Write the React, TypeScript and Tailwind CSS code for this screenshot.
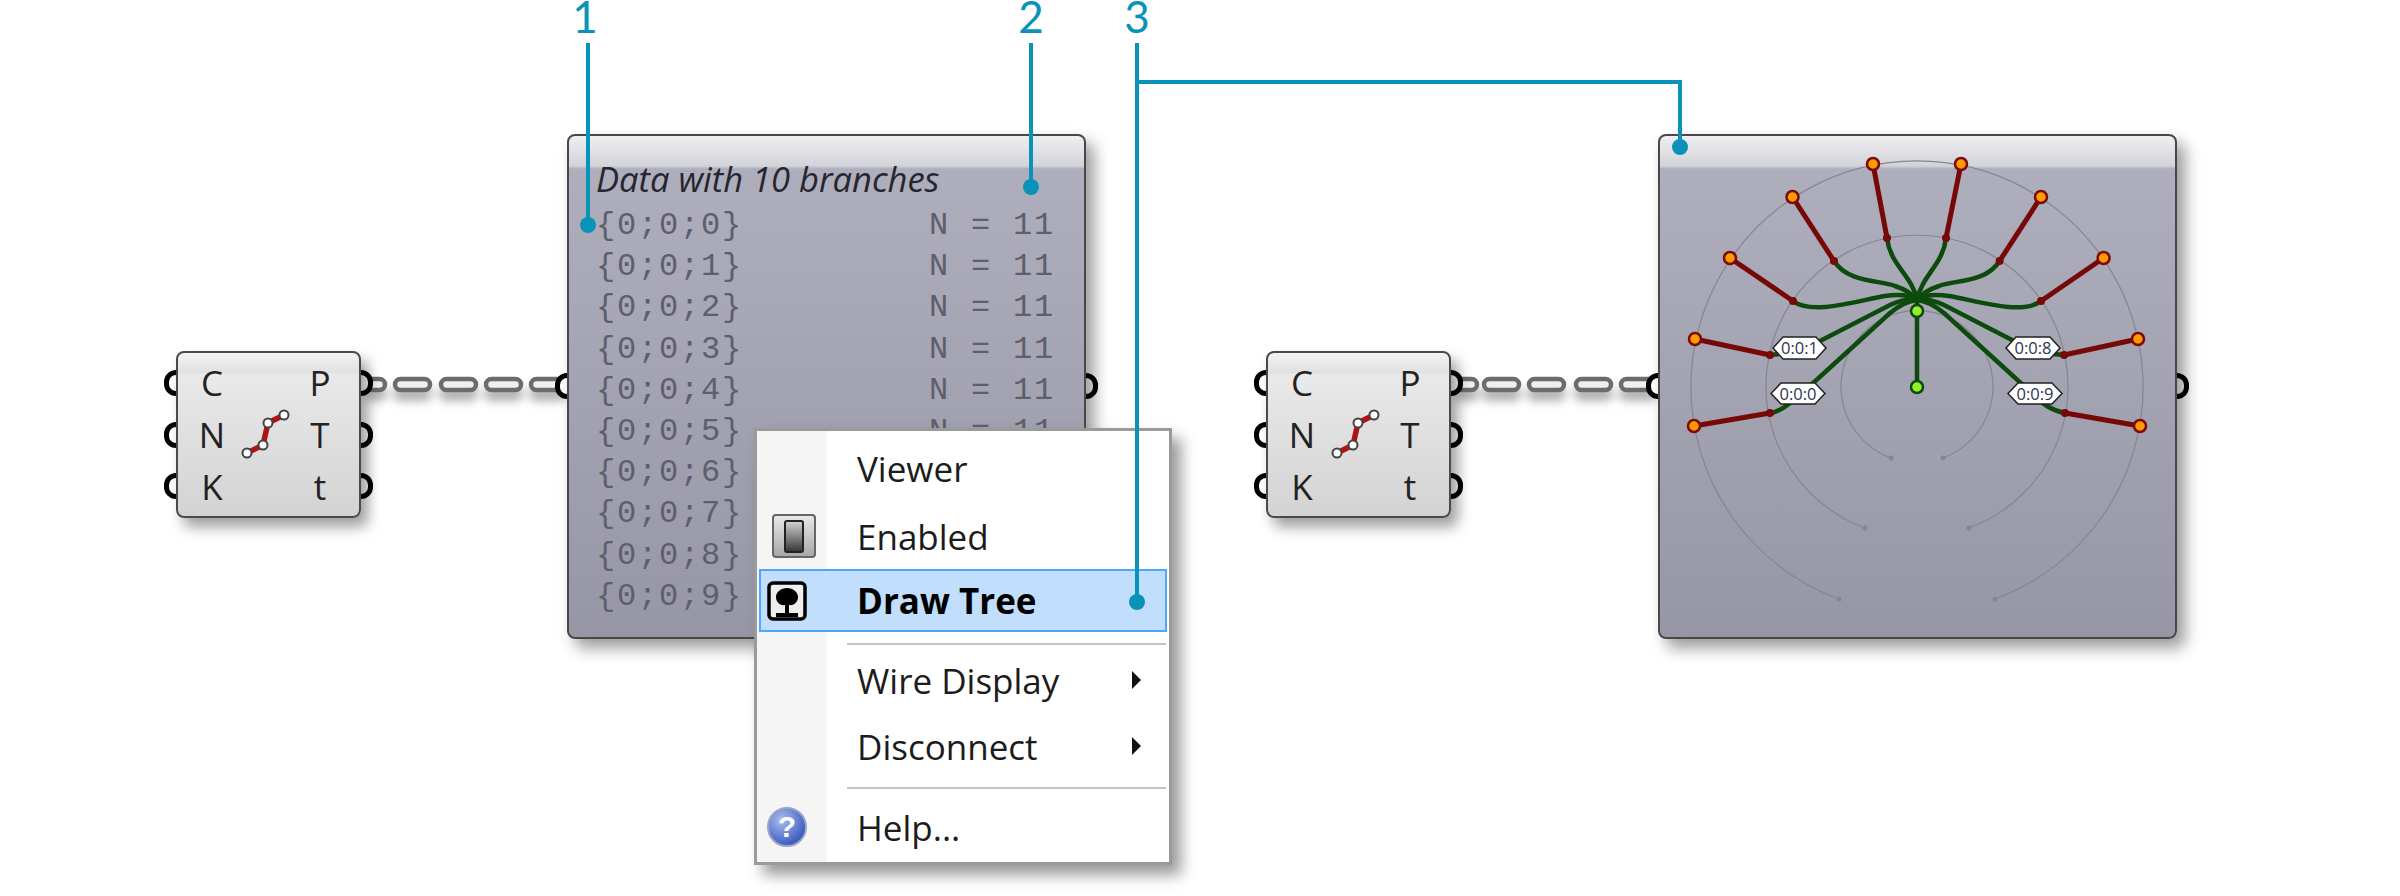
import React from "react";

const BLUE = "#0a93b8";

function Port({ side, top }: { side: "l" | "r"; top: string }) {
  return (
    <div
      className={`absolute w-[24px] h-[26px] rounded-full border-[5px] border-black bg-white ${
        side === "l" ? "left-[-12px]" : "right-[-12px]"
      } ${top}`}
    />
  );
}

function CurveIcon() {
  return (
    <svg width="56" height="56" viewBox="0 0 56 56" className="shrink-0">
      <polyline points="9,46 25,38 30,16 46,8" fill="none" stroke="#b01212" strokeWidth="5.5" />
      {[[9, 46], [25, 38], [30, 16], [46, 8]].map(([x, y]) => (
        <circle key={x} cx={x} cy={y} r="4.5" fill="#fff" stroke="#444" strokeWidth="2" />
      ))}
    </svg>
  );
}

function CurveComponent({ pos }: { pos: string }) {
  const ins = ["C", "N", "K"];
  const outs = ["P", "T", "t"];
  return (
    <div className={`absolute top-[351px] w-[185px] h-[167px] ${pos}`}>
      <Port side="l" top="top-[19px]" />
      <Port side="l" top="top-[71px]" />
      <Port side="l" top="top-[122px]" />
      <Port side="r" top="top-[19px]" />
      <Port side="r" top="top-[71px]" />
      <Port side="r" top="top-[122px]" />
      <div className="relative h-full rounded-[8px] border-[2.5px] border-[#4a4a4a] bg-[linear-gradient(180deg,#f3f3f3_0,#e0e0e0_20px,#e9e9e9_21px,#d3d3d3_100%)] shadow-[7px_9px_14px_rgba(0,0,0,0.38)] flex items-center justify-between pl-[16px] pr-[21px] font-['Open_Sans',sans-serif] text-[35px] leading-none text-[#222]">
        <div className="flex flex-col items-center w-[36px] gap-[17px]">
          {ins.map((t) => (
            <span key={t} className="h-[35px] flex items-center">{t}</span>
          ))}
        </div>
        <CurveIcon />
        <div className="flex flex-col items-center w-[36px] gap-[17px]">
          {outs.map((t) => (
            <span key={t} className="h-[35px] flex items-center">{t}</span>
          ))}
        </div>
      </div>
    </div>
  );
}

function Wire({ segs, y }: { segs: [number, number][]; y: number }) {
  return (
    <g>
      {segs.map(([a, b]) => (
        <rect key={a} x={a} y={y - 5} width={b - a} height={11} rx="5.5" fill="#efefef" stroke="#6c6c6c" strokeWidth="4.5" />
      ))}
    </g>
  );
}

const rows = [0, 1, 2, 3, 4, 5, 6, 7, 8, 9];

function DataPanel() {
  return (
    <div className="absolute left-[567px] top-[134px] w-[519px] h-[505px]">
      <Port side="l" top="top-[239px]" />
      <Port side="r" top="top-[239px]" />
      <div className="relative h-full rounded-[8px] border-[2.5px] border-[#484848] bg-[linear-gradient(180deg,#efeff2_0,#d2d2da_30px,#aeaebc_33px,#9696a4_100%)] shadow-[8px_9px_16px_rgba(0,0,0,0.4)] pl-[27px] pr-[29px] pt-[23px]">
        <div className="font-['Open_Sans',sans-serif] italic text-[34.5px] leading-[40px] text-[#26262e]">
          Data with 10 branches
        </div>
        <div className="flex flex-col pt-[6px] font-['Liberation_Mono',monospace] text-[32px] tracking-[1.8px] text-[#5e5e6c]">
          {rows.map((r) => (
            <div key={r} className="h-[41.2px] leading-[41px] flex justify-between">
              <span>{`{0;0;${r}}`}</span>
              <span>N = 11</span>
            </div>
          ))}
        </div>
      </div>
    </div>
  );
}

const leftOuter = [[1694, 426], [1695, 339], [1730, 258], [1792.5, 197], [1873, 164]];
const rightOuter = [[2140, 426], [2138, 339], [2103.6, 258], [2041, 197], [1961, 164]];
const leftMid = [[1770, 413], [1770, 355], [1793, 301], [1834, 261], [1887, 238]];
const rightMid = [[2065, 413], [2064, 355], [2041, 301], [1999.6, 261], [1946, 238]];

const greens = [
  "M1770 413 C1782 411 1790 403 1800 395 L1890 313 Q1905 301 1917 300",
  "M1770 355 L1790 353 L1822 340 L1890 305 Q1905 298 1917 300",
  "M1793 301 C1812 316 1860 300 1885 296 Q1907 293 1917 300",
  "M1834 261 C1848 283 1880 280 1895 286 Q1910 291 1917 300",
  "M1887 238 C1890 265 1912 275 1917 300",
  "M1946 238 C1943 265 1922 275 1917 300",
  "M1999.6 261 C1986 283 1954 280 1939 286 Q1924 291 1917 300",
  "M2041 301 C2022 316 1974 300 1949 296 Q1927 293 1917 300",
  "M2064 355 L2044 353 L2012 340 L1944 305 Q1929 298 1917 300",
  "M2065 413 C2053 411 2040 403 2034 395 L1944 313 Q1929 301 1917 300",
];

const arcs = [
  [1891, 458, 1943, 458, 76],
  [1865, 528, 1969, 528, 151],
  [1839, 599, 1995, 599, 226],
];

function Hex({ x1, x2, y1, y2, t }: { x1: number; x2: number; y1: number; y2: number; t: string }) {
  const my = (y1 + y2) / 2;
  return (
    <g>
      <polygon
        points={`${x1},${my} ${x1 + 10},${y1} ${x2 - 10},${y1} ${x2},${my} ${x2 - 10},${y2} ${x1 + 10},${y2}`}
        fill="#fff"
        stroke="#222"
        strokeWidth="1.5"
      />
      <text
        x={(x1 + x2) / 2}
        y={my + 6}
        textAnchor="middle"
        fontSize="16.5"
        fill="#2b3550"
        fontFamily="'Open Sans', sans-serif"
      >
        {t}
      </text>
    </g>
  );
}

function TreePanel() {
  return (
    <div className="absolute left-[1658px] top-[134px] w-[519px] h-[505px]">
      <Port side="l" top="top-[239px]" />
      <Port side="r" top="top-[239px]" />
      <div className="relative h-full rounded-[8px] border-[2.5px] border-[#484848] bg-[linear-gradient(180deg,#efeff2_0,#d2d2da_30px,#aeaebc_33px,#9696a4_100%)] shadow-[8px_9px_16px_rgba(0,0,0,0.4)]" />
      <svg className="absolute inset-0" width="519" height="505" viewBox="1658 134 519 505">
        {arcs.map(([x1, y1, x2, y2, r]) => (
          <g key={r}>
            <path
              d={`M${x1} ${y1} A${r} ${r} 0 1 1 ${x2} ${y2}`}
              fill="none"
              stroke="#86868f"
              strokeWidth="1.2"
            />
            <circle cx={x1} cy={y1} r="2.5" fill="#85858f" />
            <circle cx={x2} cy={y2} r="2.5" fill="#85858f" />
          </g>
        ))}
        {greens.map((d) => (
          <path key={d} d={d} fill="none" stroke="#0d4a0d" strokeWidth="4.5" />
        ))}
        <line x1="1917" y1="300" x2="1917" y2="387" stroke="#0d4a0d" strokeWidth="4.5" />
        {leftOuter.concat(rightOuter).map(([x, y], i) => {
          const [mx, my] = leftMid.concat(rightMid)[i];
          return (
            <g key={i}>
              <line x1={x} y1={y} x2={mx} y2={my} stroke="#760808" strokeWidth="5" />
              <circle cx={mx} cy={my} r="4" fill="#760808" />
              <circle cx={x} cy={y} r="6" fill="#ff9a00" stroke="#7d0a0a" strokeWidth="2.5" />
            </g>
          );
        })}
        <circle cx="1917" cy="311" r="6" fill="#93f02e" stroke="#0d4a0d" strokeWidth="2.5" />
        <circle cx="1917" cy="387" r="6" fill="#93f02e" stroke="#0d4a0d" strokeWidth="2.5" />
        <Hex x1={1773} x2={1826} y1={337} y2={359} t="0:0:1" />
        <Hex x1={1771} x2={1825} y1={383} y2={404} t="0:0:0" />
        <Hex x1={2006} x2={2060} y1={337} y2={359} t="0:0:8" />
        <Hex x1={2008} x2={2062} y1={383} y2={404} t="0:0:9" />
      </svg>
    </div>
  );
}

function SubArrow() {
  return (
    <svg width="11" height="18" viewBox="0 0 11 18" className="absolute right-[25px] top-1/2 -translate-y-1/2">
      <polygon points="1,0 10,9 1,18" fill="#111" />
    </svg>
  );
}

function MenuItem({
  h,
  label,
  icon,
  arrow,
  bold,
  active,
}: {
  h: string;
  label: string;
  icon?: React.ReactNode;
  arrow?: boolean;
  bold?: boolean;
  active?: boolean;
}) {
  return (
    <div
      className={`relative flex items-center ${h} ${
        active ? "bg-[#c1defc] border-2 border-[#4ea7fb]" : ""
      }`}
    >
      <div className={`flex items-center shrink-0 ${active ? "w-[68px] pl-[6px]" : "w-[70px] pl-[8px]"}`}>{icon}</div>
      <span className={`ml-[28px] text-[35px] leading-none text-[#1c1c1c] ${bold ? "font-bold text-black" : ""}`}>
        {label}
      </span>
      {arrow && <SubArrow />}
    </div>
  );
}

function Sep() {
  return <div className="h-[2px] ml-[88px] mr-[1px] bg-[#c4c4c4]" />;
}

function EnabledIcon() {
  return (
    <div className="ml-[5px] w-[44px] h-[44px] rounded-[4px] border-2 border-[#666] bg-[linear-gradient(180deg,#e8e8e8,#a8a8a8)] flex items-center justify-center">
      <div className="w-[20px] h-[33px] rounded-[3px] border-2 border-[#222] bg-[linear-gradient(180deg,#cfcfcf,#3a3a3a)]" />
    </div>
  );
}

function TreeIcon() {
  return (
    <svg width="40" height="40" viewBox="0 0 40 40">
      <rect x="2" y="2" width="36" height="36" rx="4" fill="#eee" stroke="#000" strokeWidth="3.5" />
      <path d="M20 7 C26 7 31 11 31 16 C31 21 27 25 22 24 L22 32 L31 32 L31 36 L9 36 L9 32 L18 32 L18 24 C13 25 9 21 9 16 C9 11 14 7 20 7 Z" fill="#000" />
    </svg>
  );
}

function HelpIcon() {
  return (
    <div className="w-[40px] h-[40px] rounded-full border-2 border-[#98a6c8] bg-[radial-gradient(circle_at_35%_30%,#a9bdf0,#3d5cc0_75%)] flex items-center justify-center text-white font-bold text-[30px] leading-none font-['Liberation_Sans',sans-serif]">
      ?
    </div>
  );
}

function ContextMenu() {
  return (
    <div className="absolute left-[754px] top-[428px] w-[418px] h-[437px] bg-white border-[3px] border-[#9a9a9a] shadow-[9px_10px_14px_rgba(0,0,0,0.4)] font-['Open_Sans',sans-serif] p-[2px] z-10">
      <div className="absolute left-0 top-0 bottom-0 w-[70px] bg-[#f5f5f5]" />
      <div className="relative flex flex-col">
        <MenuItem h="h-[70px]" label="Viewer" />
        <MenuItem h="h-[66px]" label="Enabled" icon={<EnabledIcon />} />
        <MenuItem h="h-[63px]" label="Draw Tree" icon={<TreeIcon />} bold active />
        <div className="h-[11px]" />
        <Sep />
        <MenuItem h="h-[70px]" label="Wire Display" arrow />
        <MenuItem h="h-[62px]" label="Disconnect" arrow />
        <div className="h-[10px]" />
        <Sep />
        <MenuItem h="h-[76px]" label="Help..." icon={<HelpIcon />} />
      </div>
    </div>
  );
}

function Callouts() {
  return (
    <svg className="absolute inset-0 z-20 pointer-events-none" width="2400" height="896" viewBox="0 0 2400 896">
      <g stroke={BLUE} strokeWidth="4" fill="none">
        <line x1="588" y1="43" x2="588" y2="225" />
        <line x1="1031" y1="43" x2="1031" y2="187" />
        <line x1="1137" y1="43" x2="1137" y2="602" />
        <polyline points="1137,82 1680,82 1680,147" />
      </g>
      <g fill={BLUE}>
        <circle cx="588" cy="225" r="8" />
        <circle cx="1031" cy="187" r="8" />
        <circle cx="1137" cy="602" r="8" />
        <circle cx="1680" cy="147" r="8" />
      </g>
    </svg>
  );
}

function Digit({ pos, t }: { pos: string; t: string }) {
  return (
    <div className={`absolute top-0 -translate-x-1/2 font-['Lato',sans-serif] text-[44px] leading-[32px] text-[#0a93b8] ${pos}`}>
      {t}
    </div>
  );
}

export default function App() {
  return (
    <div className="relative w-[2400px] h-[896px] bg-white overflow-hidden">
      <svg className="absolute inset-0 drop-shadow-[0_9px_5px_rgba(0,0,0,0.3)]" width="2400" height="896" viewBox="0 0 2400 896">
        <Wire y={384} segs={[[366, 385], [395, 430], [441, 476], [486, 521], [531, 565]]} />
        <Wire y={384} segs={[[1456, 1477], [1484, 1519], [1529, 1564], [1576, 1611], [1621, 1655]]} />
      </svg>
      <CurveComponent pos="left-[176px]" />
      <DataPanel />
      <CurveComponent pos="left-[1266px]" />
      <TreePanel />
      <ContextMenu />
      <Callouts />
      <Digit pos="left-[585px]" t="1" />
      <Digit pos="left-[1031px]" t="2" />
      <Digit pos="left-[1137px]" t="3" />
    </div>
  );
}
